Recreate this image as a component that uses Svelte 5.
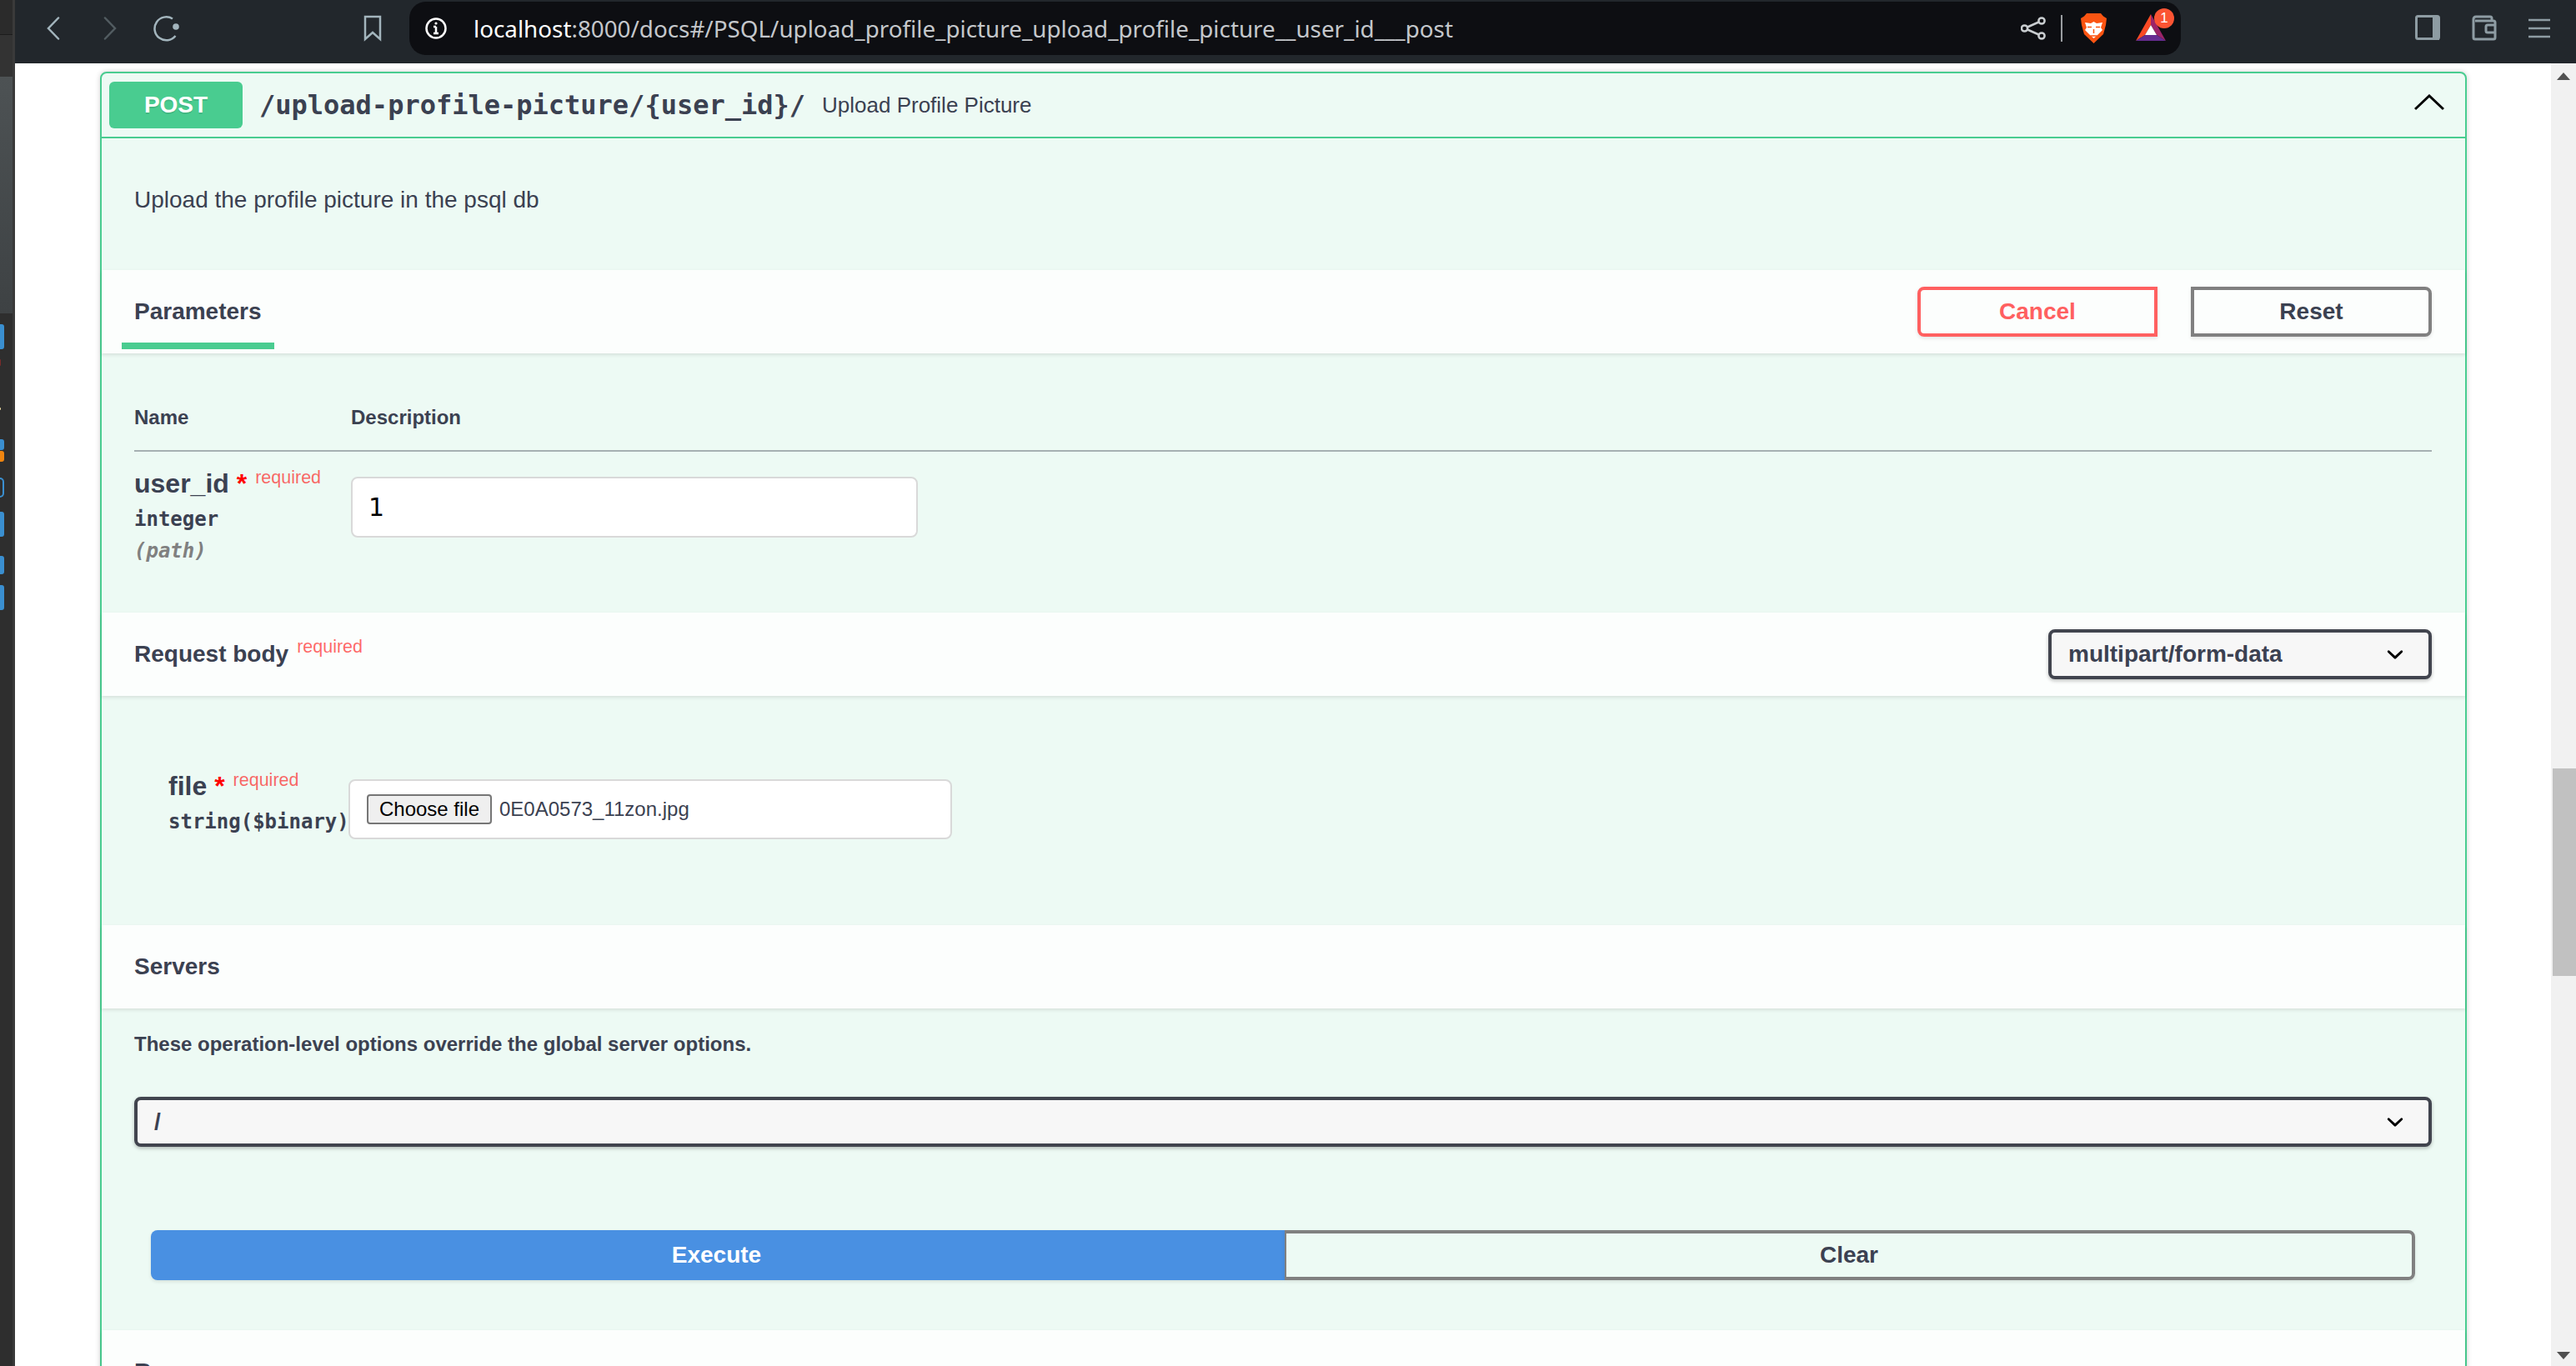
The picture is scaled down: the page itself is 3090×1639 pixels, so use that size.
<script>
  const mediaTypes = ['multipart/form-data'];
  const caret = 'M13.418 7.859a.695.695 0 0 1 .978 0 .68.68 0 0 1 0 .969l-3.908 3.83a.697.697 0 0 1-.979 0l-3.908-3.83a.68.68 0 0 1 0-.969.695.695 0 0 1 .978 0L10 11l3.418-3.141z';
</script>

<div class="shell">
  <aside class="dock">
    <div class="dock-top"></div>
    <div class="dock-mid"></div>
    <div class="dock-lit"></div>
    <div class="dock-icons">
      <span class="dock-icon tall"></span>
      <span class="dock-icon dark-red"></span>
      <span class="dock-icon dot"></span>
      <span class="dock-icon small"></span>
      <span class="dock-icon orange"></span>
      <span class="dock-icon ring"></span>
      <span class="dock-icon tall"></span>
      <span class="dock-icon mid"></span>
      <span class="dock-icon tall"></span>
    </div>
  </aside>

  <div class="window">
    <header class="toolbar">
      <div class="nav">
        <svg class="tool-icon" viewBox="0 0 16 28"><path d="M14 1.500 2 14l12 12.500" /></svg>
        <svg class="tool-icon off" viewBox="0 0 16 28"><path d="M2 1.500 14 14 2 26.500" /></svg>
        <svg class="reload" viewBox="0 0 32 32"><path d="M23 4.500A14 14 0 1 0 26.500 25" /><circle cx="27" cy="14" r="3.800" /></svg>
      </div>
      <svg class="bookmark" viewBox="0 0 24 32"><path d="M3 2h18v27l-9-8-9 8z" /></svg>
      <div class="address">
        <svg class="info" viewBox="0 0 28 28">
          <circle cx="14" cy="14" r="11.500" />
          <path d="M14 12v8M11 20h6M11 12h3" />
          <circle class="info-dot" cx="14" cy="8" r="1.600" />
        </svg>
        <div class="url"><span class="host">localhost</span>:8000/docs#/PSQL/upload_profile_picture_upload_profile_picture__user_id___post</div>
        <svg class="share" viewBox="0 0 30 28">
          <circle cx="25" cy="5" r="3.600" /><circle cx="4.500" cy="14" r="3.600" /><circle cx="25" cy="23" r="3.600" />
          <path d="M8 12.500 21.500 6.500M8 15.500l13.500 6" />
        </svg>
        <span class="divider"></span>
        <svg class="brave" viewBox="0 0 31 36">
          <path class="shield" d="M7 0h17l3 3.500 4 2.500-1 8-3 11-11.500 11L4 25 1 14 0 6l4-2.500z" />
          <path class="lion" d="m5 11 7 1 3.500-2 3.500 2 7-1-2 6 2 3-6 6-4.500 4-4.500-4-6-6 2-3z" />
          <path class="lion-line" d="M8 16.500h5M18 16.500h5M15.500 19v5M11.500 27h8" />
        </svg>
        <div class="rewards">
          <svg viewBox="0 0 36 32">
            <path fill="#fb4a25" d="M18 0 0 32l11-7 7-12z" />
            <path fill="#9c2468" d="m18 0 18 32-11-7-7-12z" />
            <path fill="#662d91" d="M0 32h36l-11-7H11z" />
            <path fill="#fff" d="m18 13-7 12h14z" />
          </svg>
          <span class="badge">1</span>
        </div>
      </div>
      <div class="actions">
        <svg class="act" viewBox="0 0 30 32">
          <rect x="1.500" y="1.500" width="27" height="27" rx="2" />
          <path class="act-fill" d="M21 1h8v29h-8z" />
        </svg>
        <svg class="act" viewBox="0 0 30 32">
          <path d="M24 7V4a2 2 0 0 0-2-2H5a3 3 0 0 0-3 3v22a2 2 0 0 0 2 2h22a2 2 0 0 0 2-2V9a2 2 0 0 0-2-2H4" />
          <path d="M28 12h-9a2 2 0 0 0-2 2v5a2 2 0 0 0 2 2h9" />
        </svg>
        <svg class="act menu" viewBox="0 0 30 32"><path d="M0 6h26M0 16h26M0 26h26" /></svg>
      </div>
    </header>

    <div class="viewport">
      <main class="page">
        <section class="card">
          <div class="summary">
            <span class="method">POST</span>
            <span class="path">/upload-profile-picture/&#123;user_id&#125;/</span>
            <span class="summary-text">Upload Profile Picture</span>
            <svg class="collapse" viewBox="0 0 36 20"><path d="M1 18 18 2l17 16" /></svg>
          </div>

          <div class="desc">Upload the profile picture in the psql db</div>

          <div class="band band-params">
            <div class="tab">Parameters</div>
            <div class="band-actions">
              <button class="btn cancel">Cancel</button>
              <button class="btn reset">Reset</button>
            </div>
          </div>

          <div class="params">
            <div class="param-head">
              <span class="col-name">Name</span>
              <span>Description</span>
            </div>
            <div class="param-row">
              <div class="col-name">
                <div class="param-name">user_id<span class="star">&nbsp;*</span><sup class="req">required</sup></div>
                <div class="param-type">integer</div>
                <div class="param-in">(path)</div>
              </div>
              <input class="text-input" type="text" value="1" />
            </div>
          </div>

          <div class="band band-body">
            <div class="band-title">Request body<sup class="req">required</sup></div>
            <div class="select media-select">
              {#each mediaTypes as m}<span>{m}</span>{/each}
              <svg class="caret" viewBox="0 0 20 20"><path d={caret} /></svg>
            </div>
          </div>

          <div class="body-form">
            <div class="file-label">
              <div class="param-name">file<span class="star">&nbsp;*</span><sup class="req">required</sup></div>
              <div class="param-type">string($binary)</div>
            </div>
            <div class="file-input">
              <span class="choose">Choose file</span>
              <span class="file-name">0E0A0573_11zon.jpg</span>
            </div>
          </div>

          <div class="band band-servers">
            <div class="band-title">Servers</div>
          </div>

          <div class="servers">
            <p class="servers-note">These operation-level options override the global server options.</p>
            <div class="select server-select">
              <span>/</span>
              <svg class="caret" viewBox="0 0 20 20"><path d={caret} /></svg>
            </div>
            <div class="exec-row">
              <button class="exec">Execute</button>
              <button class="clear">Clear</button>
            </div>
          </div>

          <div class="band band-responses">
            <div class="band-title">Responses</div>
          </div>
        </section>
      </main>

      <div class="scrollbar">
        <span class="arrow up"></span>
        <span class="thumb"></span>
        <span class="arrow down"></span>
      </div>
    </div>
  </div>
</div>

<style>
  :global(body) {
    margin: 0;
    background: #fff;
    overflow: hidden;
  }

  .shell {
    display: flex;
    width: 3090px;
    height: 1639px;
    overflow: hidden;
    font-family: "Liberation Sans", Arial, sans-serif;
    color: #3b4151;
  }

  /* left desktop dock */
  .dock {
    width: 18px;
    flex: none;
    background: #2e2e2e;
    border-right: 3px solid #3a3a3a;
    box-sizing: border-box;
    display: flex;
    flex-direction: column;
  }
  .dock-top {
    height: 41px;
    flex: none;
    background: #2b2b2b;
    border-bottom: 1px solid #1c1c1c;
  }
  .dock-mid {
    height: 50px;
    flex: none;
    background: #333;
  }
  .dock-lit {
    height: 284px;
    flex: none;
    background: linear-gradient(#4d5254, #3e4244);
  }
  .dock-icons {
    display: flex;
    flex-direction: column;
    padding-top: 13px;
  }
  .dock-icon {
    display: block;
    width: 5px;
    background: #3a8fd0;
    border-radius: 0 3px 3px 0;
  }
  .dock-icon.tall { height: 30px; margin-bottom: 23px; }
  .dock-icon.dark-red { height: 8px; width: 1px; background: #7a2a2a; margin: -11px 0 50px; }
  .dock-icon.dot { height: 3px; width: 1px; background: #ead9a0; margin-bottom: 35px; }
  .dock-icon.small { height: 13px; }
  .dock-icon.orange { height: 13px; background: #ef8510; margin: 1px 0 19px; }
  .dock-icon.ring { height: 24px; background: none; border: 2px solid #3a8fd0; border-left: 0; box-sizing: border-box; border-radius: 0 14px 14px 0; margin-bottom: 17px; }
  .dock-icon.mid { height: 22px; margin-bottom: 13px; }

  .window {
    flex: 1;
    min-width: 0;
    display: flex;
    flex-direction: column;
  }

  /* browser toolbar */
  .toolbar {
    height: 76px;
    flex: none;
    box-sizing: border-box;
    padding: 2px 0 10px;
    background: #22272c;
    display: flex;
    align-items: stretch;
  }
  .nav {
    width: 196px;
    flex: none;
    display: flex;
    align-items: center;
    padding-left: 38px;
    gap: 52px;
    box-sizing: border-box;
  }
  .tool-icon {
    width: 16px;
    height: 28px;
    flex: none;
    fill: none;
    stroke: #a3b5bd;
    stroke-width: 2.500;
    stroke-linecap: round;
  }
  .tool-icon.off { stroke: #525c61; }
  .reload {
    width: 32px;
    height: 32px;
    flex: none;
    margin-left: -8px;
    fill: none;
    stroke: #a3b5bd;
    stroke-width: 2.500;
  }
  .reload circle { fill: #a3b5bd; stroke: none; }
  .bookmark {
    width: 24px;
    height: 32px;
    flex: none;
    align-self: center;
    margin-left: 221px;
    margin-right: 32px;
    fill: none;
    stroke: #a3b5bd;
    stroke-width: 2.500;
  }
  .address {
    width: 2125px;
    flex: none;
    display: flex;
    align-items: center;
    background: #0d0e12;
    border-radius: 20px;
    box-sizing: border-box;
    padding-left: 18px;
  }
  .info {
    width: 28px;
    height: 28px;
    flex: none;
    fill: none;
    stroke: #fff;
    stroke-width: 2.500;
  }
  .info-dot { fill: #fff; stroke: none; }
  .url {
    margin-left: 31px;
    flex: 1;
    font-family: "Noto Sans", Roboto, sans-serif;
    font-size: 27.8px;
    color: #c4c7cb;
    white-space: nowrap;
  }
  .host { color: #fff; }
  .share {
    width: 30px;
    height: 28px;
    flex: none;
    fill: none;
    stroke: #c9cdd0;
    stroke-width: 2.500;
  }
  .divider {
    width: 2px;
    height: 32px;
    flex: none;
    background: #9a9da1;
    margin: 0 22px 0 18px;
  }
  .brave {
    width: 31px;
    height: 36px;
    flex: none;
  }
  .shield { fill: #fb5412; }
  .lion { fill: #fff; }
  .lion-line { fill: none; stroke: #fb5412; stroke-width: 1.500; }
  .rewards {
    width: 36px;
    height: 32px;
    flex: none;
    position: relative;
    margin: -2px 18px 0 35px;
  }
  .rewards svg {
    display: block;
    width: 36px;
    height: 32px;
  }
  .badge {
    position: absolute;
    left: 22px;
    top: -7px;
    width: 24px;
    height: 24px;
    border-radius: 12px;
    background: #fb5433;
    color: #fff;
    font-size: 17px;
    line-height: 24px;
    text-align: center;
  }
  .actions {
    display: flex;
    align-items: center;
    gap: 38px;
    margin-left: 281px;
  }
  .act {
    width: 30px;
    height: 32px;
    flex: none;
    fill: none;
    stroke: #8e9ca3;
    stroke-width: 3;
  }
  .act.menu {
    stroke-width: 2.500;
  }
  .act-fill { fill: #8e9ca3; stroke: none; }

  .viewport {
    flex: 1;
    min-height: 0;
    display: flex;
  }
  .page {
    flex: 1;
    min-width: 0;
    padding: 10px 0 0 102px;
    overflow: hidden;
  }

  /* swagger operation block */
  .card {
    width: 2839px;
    box-sizing: border-box;
    border: 2px solid #49cc90;
    border-radius: 8px;
    background: #edfaf4;
    box-shadow: 0 0 6px rgba(0, 0, 0, 0.19);
  }
  .summary {
    height: 78px;
    box-sizing: border-box;
    border-bottom: 2px solid #49cc90;
    display: flex;
    align-items: center;
    padding-left: 9px;
  }
  .method {
    width: 160px;
    height: 56px;
    border-radius: 6px;
    background: #49cc90;
    color: #fff;
    font-size: 28px;
    font-weight: 700;
    line-height: 56px;
    text-align: center;
    text-shadow: 0 2px 0 rgba(0, 0, 0, 0.1);
  }
  .path {
    margin-left: 20px;
    font-family: "DejaVu Sans Mono", monospace;
    font-size: 32px;
    font-weight: 700;
  }
  .summary-text {
    margin-left: 20px;
    font-size: 26px;
  }
  .collapse {
    width: 36px;
    height: 20px;
    margin-left: auto;
    margin-right: 25px;
    margin-top: -6px;
    fill: none;
    stroke: #000;
    stroke-width: 3;
  }
  .desc {
    height: 158px;
    box-sizing: border-box;
    padding: 57px 0 0 39px;
    font-size: 28px;
    line-height: 34px;
  }

  .band {
    display: flex;
    align-items: center;
    box-sizing: border-box;
    height: 100px;
    padding: 0 40px 0 39px;
    background: rgba(255, 255, 255, 0.8);
    box-shadow: 0 2px 4px rgba(0, 0, 0, 0.1);
    position: relative;
  }
  .band-params {
    justify-content: space-between;
  }
  .tab {
    font-size: 28px;
    font-weight: 700;
    position: relative;
  }
  .tab::after {
    content: "";
    position: absolute;
    left: -15px;
    right: -15px;
    top: 53px;
    height: 8px;
    background: #49cc90;
  }
  .band-actions {
    display: flex;
    gap: 40px;
  }
  .btn {
    width: 289px;
    height: 60px;
    background: transparent;
    font-family: inherit;
    font-size: 28px;
    font-weight: 700;
    box-shadow: 0 2px 4px rgba(0, 0, 0, 0.1);
  }
  .cancel {
    width: 288px;
    border: 4px solid #ff6060;
    border-radius: 8px 0 0 8px;
    color: #ff6060;
  }
  .reset {
    border: 4px solid #808080;
    border-radius: 0 8px 8px 0;
    color: #3b4151;
  }

  .params {
    height: 311px;
    box-sizing: border-box;
    padding: 0 40px 0 39px;
  }
  .param-head {
    height: 118px;
    box-sizing: border-box;
    padding-top: 63px;
    border-bottom: 2px solid rgba(59, 65, 81, 0.4);
    font-size: 24px;
    font-weight: 700;
    display: flex;
  }
  .col-name {
    width: 260px;
    flex: none;
  }
  .param-row {
    display: flex;
    padding-top: 30px;
  }
  .param-name {
    font-size: 32px;
    font-weight: 700;
    line-height: 40px;
    white-space: nowrap;
    margin-top: -12px;
  }
  .star {
    color: #f00;
  }
  .req {
    color: rgba(255, 0, 0, 0.6);
    font-size: 21.5px;
    font-weight: 400;
    margin-left: 10px;
    line-height: 0;
    vertical-align: 11px;
  }
  .param-type {
    font-family: "DejaVu Sans Mono", monospace;
    font-size: 24px;
    font-weight: 700;
    line-height: 28px;
    margin-top: 9px;
  }
  .param-in {
    font-family: "DejaVu Sans Mono", monospace;
    font-size: 24px;
    font-style: italic;
    font-weight: 600;
    line-height: 28px;
    margin-top: 10px;
    color: #808080;
  }
  .text-input {
    width: 680px;
    height: 73px;
    box-sizing: border-box;
    border: 2px solid #d9d9d9;
    border-radius: 8px;
    background: #fff;
    padding: 0 19px;
    font-family: "DejaVu Sans", sans-serif;
    font-size: 30px;
    color: #000;
    outline: none;
  }

  .band-body {
    justify-content: space-between;
  }
  .band-title {
    font-size: 28px;
    font-weight: 700;
    white-space: nowrap;
  }
  .select {
    display: flex;
    align-items: center;
    justify-content: space-between;
    height: 60px;
    box-sizing: border-box;
    border: 4px solid #41444e;
    border-radius: 8px;
    background: #f7f7f7;
    padding: 0 20px;
    font-size: 28px;
    font-weight: 700;
    box-shadow: 0 2px 4px rgba(0, 0, 0, 0.25);
  }
  .media-select {
    width: 460px;
  }
  .caret {
    width: 40px;
    height: 40px;
    flex: none;
    fill: #000;
  }

  .body-form {
    height: 275px;
    box-sizing: border-box;
    padding: 100px 0 0 80px;
    display: flex;
  }
  .file-label {
    width: 216px;
    flex: none;
  }
  .file-input {
    width: 724px;
    height: 72px;
    box-sizing: border-box;
    border: 2px solid #d9d9d9;
    border-radius: 8px;
    background: #fff;
    padding-left: 20px;
    display: flex;
    align-items: center;
    font-size: 24px;
  }
  .choose {
    width: 150px;
    height: 36px;
    box-sizing: border-box;
    border: 2px solid #767676;
    border-radius: 4px;
    background: #efefef;
    color: #000;
    line-height: 31px;
    text-align: center;
  }
  .file-name {
    margin-left: 9px;
  }

  .servers {
    height: 386px;
    box-sizing: border-box;
    padding: 28px 40px 0 39px;
  }
  .servers-note {
    margin: 0;
    font-size: 24px;
    font-weight: 700;
    line-height: 30px;
  }
  .server-select {
    margin-top: 48px;
  }
  .exec-row {
    display: flex;
    margin: 100px 20px 0;
  }
  .exec, .clear {
    height: 60px;
    box-sizing: border-box;
    font-family: inherit;
    font-size: 28px;
    font-weight: 700;
    box-shadow: 0 2px 4px rgba(0, 0, 0, 0.1);
  }
  .exec {
    width: 1360px;
    flex: none;
    border: 0;
    padding: 0 3px 0 0;
    border-radius: 8px 0 0 8px;
    background: #4990e2;
    color: #fff;
  }
  .clear {
    flex: 1;
    border: 4px solid #808080;
    border-left-width: 2px;
    border-radius: 0 8px 8px 0;
    background: transparent;
    color: #3b4151;
  }
  .band-responses {
    align-items: flex-start;
    padding-top: 34px;
  }

  /* page scrollbar */
  .scrollbar {
    width: 30px;
    flex: none;
    background: #f1f1f1;
    display: flex;
    flex-direction: column;
    align-items: flex-end;
    position: relative;
  }
  .arrow {
    width: 0;
    height: 0;
    border-left: 8px solid transparent;
    border-right: 8px solid transparent;
    position: absolute;
    right: 7px;
  }
  .arrow.up {
    top: 11px;
    border-bottom: 9px solid #505050;
  }
  .arrow.down {
    bottom: 8px;
    border-top: 9px solid #505050;
  }
  .thumb {
    width: 28px;
    height: 249px;
    margin-top: 846px;
    background: #c1c1c1;
  }
</style>
